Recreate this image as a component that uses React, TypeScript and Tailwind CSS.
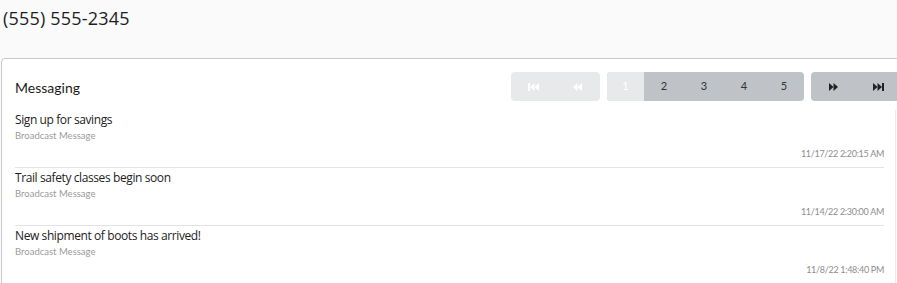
const messages = [
  { title: "Sign up for savings", kind: "Broadcast Message", time: "11/17/22 2:20:15 AM" },
  { title: "Trail safety classes begin soon", kind: "Broadcast Message", time: "11/14/22 2:30:00 AM" },
  { title: "New shipment of boots has arrived!", kind: "Broadcast Message", time: "11/8/22 1:48:40 PM" },
];

const Tri = ({ dir, bar, color }: { dir: "l" | "r"; bar?: boolean; color: string }) => (
  <svg width={bar ? 11 : 9} height="8" viewBox={bar ? "0 0 11 8" : "0 0 9 8"} fill={color}>
    {dir === "r" ? (
      <>
        <polygon points="0,0 4.5,4 0,8" />
        <polygon points="4.5,0 9,4 4.5,8" />
        {bar && <rect x="9" y="0" width="2" height="8" />}
      </>
    ) : bar ? (
      <>
        <rect x="0" y="0" width="2" height="8" />
        <polygon points="6.5,0 2,4 6.5,8" />
        <polygon points="11,0 6.5,4 11,8" />
      </>
    ) : (
      <>
        <polygon points="4.5,0 0,4 4.5,8" />
        <polygon points="9,0 4.5,4 9,8" />
      </>
    )}
  </svg>
);

const App = () => {
  return (
    <div className="w-[897px] h-[283px] overflow-hidden bg-[#fafafa]">
      <div className="h-[58px] pl-[3px] pt-[6px] text-[18px] leading-[24px] tracking-[0.2px] text-[#1e1e1e] font-['Open_Sans',sans-serif]">
        (555) 555-2345
      </div>

      <div className="ml-[1px] w-[920px] rounded-tl-[4px] border border-[#c9c9c9] bg-white">
        <div className="flex h-[51px] items-start pt-[13px]">
          <div className="w-[509px] pl-[13px] pt-[8px] text-[14px] leading-[16px] text-[#1c1c1c] font-['Lato',sans-serif]">
            Messaging
          </div>
          <div className="flex gap-[7px] font-['Lato',sans-serif] text-[11px] text-[#333]">
            <div className="flex h-[29px] w-[89px] overflow-hidden rounded-[4px] bg-[#e8e9eb]">
              <div className="flex w-[44px] items-center justify-center"><Tri dir="l" bar color="#ffffff" /></div>
              <div className="flex w-[45px] items-center justify-center"><Tri dir="l" color="#ffffff" /></div>
            </div>
            <div className="flex h-[29px] w-[197px] overflow-hidden rounded-[4px] bg-[#bfc3c7]">
              <div className="flex w-[37px] items-center justify-center bg-[#e8e9eb] text-white">1</div>
              {[2, 3, 4, 5].map((n) => (
                <div key={n} className="flex w-[40px] items-center justify-center">{n}</div>
              ))}
            </div>
            <div className="flex h-[29px] w-[90px] overflow-hidden rounded-[4px] bg-[#bfc3c7]">
              <div className="flex w-[44px] items-center justify-center"><Tri dir="r" color="#222" /></div>
              <div className="flex w-[46px] items-center justify-center"><Tri dir="r" bar color="#222" /></div>
            </div>
          </div>
        </div>

        <div className="w-[894px] border-r border-[#ececec] pl-[13px] pr-[11px]">
          {messages.map((m) => (
            <div key={m.title} className="h-[58px] border-b border-[#e3e3e3] pt-[2px]">
              <div className="text-[12px] leading-[16px] tracking-[-0.4px] text-[#222] font-['Open_Sans',sans-serif]">{m.title}</div>
              <div className="mt-[2px] text-[9.5px] leading-[12px] text-[#9b9b9b] font-['Lato',sans-serif]">{m.kind}</div>
              <div className="mt-[6px] text-right text-[9px] leading-[12px] tracking-[-0.3px] text-[#8d8d8d] font-['Lato',sans-serif]">{m.time}</div>
            </div>
          ))}
        </div>
      </div>
    </div>
  );
};

export default App;
